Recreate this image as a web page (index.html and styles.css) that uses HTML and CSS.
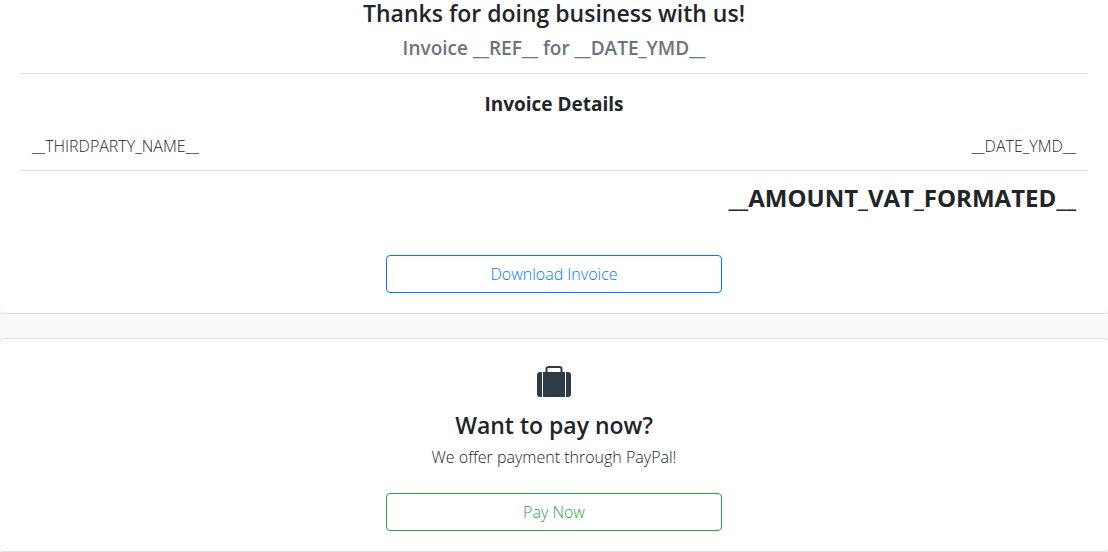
FILE: index.html
```html
<!DOCTYPE html>
<html lang="en">
  <head>
    <meta charset="UTF-8" />
    <meta name="viewport" content="width=device-width, initial-scale=1.0" />
    <title>Invoice</title>
    <link rel="stylesheet" href="styles.css">
  </head>
  <body>
    <main>
      <section class="card invoice">
        <h1 class="title">Thanks for doing business with us!</h1>
        <h2 class="reference">Invoice __REF__ for __DATE_YMD__</h2>
        <hr class="divider" />
        <h2 class="subtitle">Invoice Details</h2>
        <table class="details">
          <tr>
            <td>__THIRDPARTY_NAME__</td>
            <td class="right">__DATE_YMD__</td>
          </tr>
          <tr>
            <td class="amount" colspan="2">__AMOUNT_VAT_FORMATED__</td>
          </tr>
        </table>
        <a class="btn btn-primary" href="#">Download Invoice</a>
      </section>

      <section class="card payment">
        <svg class="icon" viewBox="0 0 36 34" aria-hidden="true">
          <path d="M10.5 7V4q0-2 2-2h11q2 0 2 2v3" fill="none" stroke="#2f3b47" stroke-width="2" />
          <path d="M6 7v25H4q-3 0-3-3V10q0-3 3-3zM7 7h22v25H7zM30 7h2q3 0 3 3v19q0 3-3 3h-2z" fill="#2f3b47" />
        </svg>
        <h2 class="title">Want to pay now?</h2>
        <p class="note">We offer payment through PayPal!</p>
        <a class="btn btn-success" href="#">Pay Now</a>
      </section>
    </main>
  </body>
</html>
```

FILE: styles.css
```css
* {
  box-sizing: border-box;
}

body {
  margin: 0;
  overflow-x: hidden;
  font-family: 'Open Sans', sans-serif;
  font-size: 16px;
  font-weight: 300;
  line-height: 24px;
  color: #212529;
  background-color: #f8f9fa;
}

h1,
h2,
p {
  margin: 0;
}

main {
  display: flex;
  flex-direction: column;
  gap: 24px;
}

.card {
  display: flex;
  flex-direction: column;
  align-items: center;
  margin: 0 -1px;
  padding: 20px;
  background-color: #fff;
  border: 1px solid #dfdfdf;
  border-radius: 4px;
}

.invoice {
  padding-top: 0;
  border-top: 0;
  border-radius: 0 0 4px 4px;
}

.title {
  font-size: 23px;
  font-weight: 600;
  line-height: 26px;
}

.reference {
  margin-top: 10px;
  font-size: 19px;
  font-weight: 600;
  color: #6c757d;
}

.divider {
  width: 100%;
  margin: 13px 0 18px;
  border: 0;
  border-top: 1px solid #dfdfdf;
}

.subtitle {
  font-size: 19px;
  font-weight: 700;
}

.details {
  width: 100%;
  margin: 6px 0 30px;
  border-collapse: collapse;
}

.details td {
  padding: 12px;
}

.details tr + tr td {
  border-top: 1px solid #dee2e6;
}

.right {
  text-align: right;
}

.details .amount {
  font-size: 24px;
  font-weight: 700;
  line-height: 30px;
  text-align: right;
}

.btn {
  width: 336px;
  max-width: 100%;
  padding: 6px 12px;
  border: 1px solid;
  border-radius: 4px;
  text-align: center;
  text-decoration: none;
}

.btn-primary {
  color: #007bff;
}

.btn-success {
  color: #28a745;
}

.payment {
  padding-top: 26px;
}

.icon {
  width: 36px;
  height: 34px;
}

.payment .title {
  margin-top: 13px;
}

.note {
  margin: 7px 0 24px;
}
```
